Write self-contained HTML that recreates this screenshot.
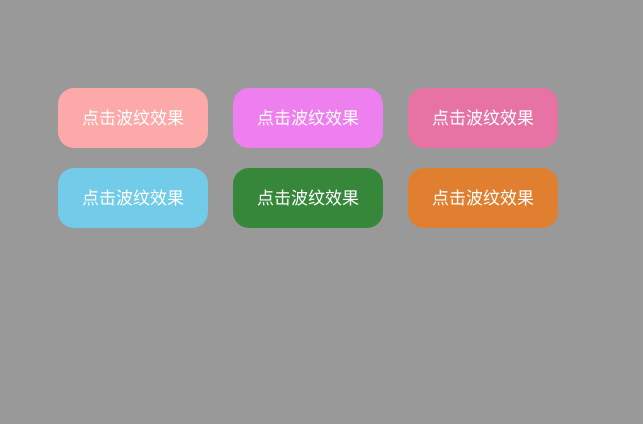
<!DOCTYPE html>
<html><head><meta charset="utf-8"><style>
html,body{margin:0;padding:0;width:643px;height:424px;background:#999999;overflow:hidden}
.b{position:absolute;width:150px;height:60px;border-radius:16px;color:#fff;font:17px/62px "Liberation Sans","Noto Sans CJK SC",sans-serif;text-align:center}
</style></head><body>
<div class="b" style="left:58px;top:88px;background:#fda9a9">点击波纹效果</div>
<div class="b" style="left:233px;top:88px;background:#ed7fee">点击波纹效果</div>
<div class="b" style="left:408px;top:88px;background:#e673a4">点击波纹效果</div>
<div class="b" style="left:58px;top:168px;background:#72cbe8">点击波纹效果</div>
<div class="b" style="left:233px;top:168px;background:#36873a">点击波纹效果</div>
<div class="b" style="left:408px;top:168px;background:#e07f2f">点击波纹效果</div>
</body></html>
